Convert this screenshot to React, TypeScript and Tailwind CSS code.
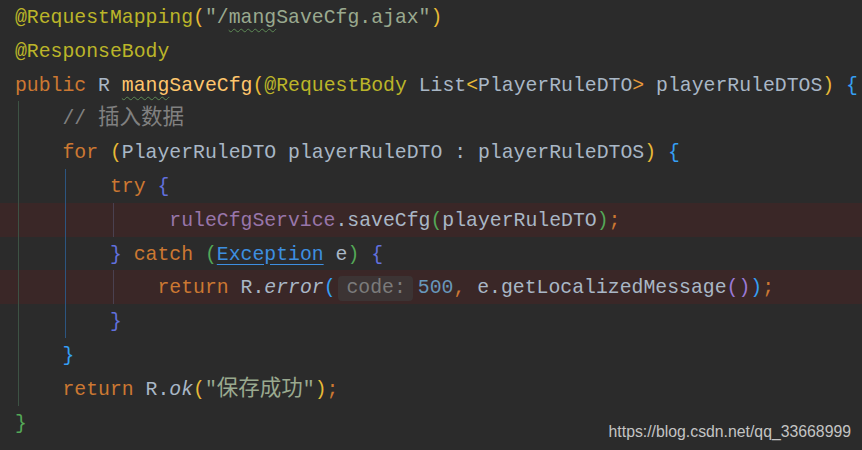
import type { ReactNode } from 'react'

// token colours (Darcula-ish + rainbow brackets)
const def = 'text-[#a9b7c6]'
const kw = 'text-[#cc7832]'
const ann = 'text-[#bbb529]'
const fn = 'text-[#ffc66d]'
const fld = 'text-[#9876aa]'
const cmt = 'text-[#808080]'
const str = 'text-[#9aa98f]'
const num = 'text-[#6897bb]'
const bYellow = 'text-[#e8ba36]'
const bGreen = 'text-[#54a857]'
const bBlue = 'text-[#359ff4]'
const bIndigo = 'text-[#6170dd]'
const bPurple = 'text-[#9b79d6]'

const guides = ['bg-[#3d5244]', 'bg-[#2c5580]', 'bg-[#4a4150]']

function Cjk({ children }: { children: ReactNode }) {
  return <span className="font-['Noto_Sans_CJK_SC',sans-serif] text-[21.5px] leading-[1]">{children}</span>
}

function Typo({ children }: { children: ReactNode }) {
  return (
    <span className="underline decoration-wavy decoration-[#5d8a55] decoration-1 underline-offset-[5px]">
      {children}
    </span>
  )
}

function Line({ depth = 0, error = false, children }: { depth?: number; error?: boolean; children?: ReactNode }) {
  return (
    <div className={`flex h-[33.8px] leading-[33.8px] pl-[15px] ${error ? 'bg-[#3a2727]' : ''}`}>
      {guides.slice(0, depth).map((g) => (
        <div key={g} className="w-[4ch] shrink-0">
          <div className={`ml-[3px] h-full w-px ${g}`} />
        </div>
      ))}
      <span className="whitespace-pre pt-[2px]">{children}</span>
    </div>
  )
}

export default function App() {
  return (
    <div className="relative w-[862px] h-[450px] overflow-hidden bg-[#2b2b2b] font-['Liberation_Mono',monospace] text-[19.8px] text-[#a9b7c6]">
      <Line>
        <span className={ann}>@RequestMapping</span>
        <span className={bYellow}>(</span>
        <span className={str}>
          "/<Typo>mang</Typo>SaveCfg.ajax"
        </span>
        <span className={bYellow}>)</span>
      </Line>
      <Line>
        <span className={ann}>@ResponseBody</span>
      </Line>
      <Line>
        <span className={kw}>public </span>
        <span className={def}>R </span>
        <span className={fn}>
          <Typo>mang</Typo>SaveCfg
        </span>
        <span className={bYellow}>(</span>
        <span className={ann}>@RequestBody </span>
        <span className={def}>List</span>
        <span className={bYellow}>&lt;</span>
        <span className={def}>PlayerRuleDTO</span>
        <span className="text-[#e89a3a]">&gt;</span>
        <span className={def}> playerRuleDTOS</span>
        <span className={bYellow}>)</span>
        <span> </span>
        <span className={bBlue}>{'{'}</span>
      </Line>
      <Line depth={1}>
        <span className={cmt}>
          // <Cjk>插入数据</Cjk>
        </span>
      </Line>
      <Line depth={1}>
        <span className={kw}>for </span>
        <span className={bYellow}>(</span>
        <span className={def}>PlayerRuleDTO playerRuleDTO : playerRuleDTOS</span>
        <span className={bYellow}>)</span>
        <span> </span>
        <span className={bBlue}>{'{'}</span>
      </Line>
      <Line depth={2}>
        <span className={kw}>try </span>
        <span className={bIndigo}>{'{'}</span>
      </Line>
      <Line depth={3} error>
        <span> </span>
        <span className={fld}>ruleCfgService</span>
        <span className={def}>.saveCfg</span>
        <span className={bGreen}>(</span>
        <span className={def}>playerRuleDTO</span>
        <span className={bGreen}>)</span>
        <span className={kw}>;</span>
      </Line>
      <Line depth={2}>
        <span className={bIndigo}>{'}'}</span>
        <span className={kw}> catch </span>
        <span className={bGreen}>(</span>
        <span className="text-[#3d8fe0] underline decoration-[#3d8fe0] underline-offset-[4px]">Exception</span>
        <span className={def}> e</span>
        <span className={bGreen}>)</span>
        <span> </span>
        <span className={bIndigo}>{'{'}</span>
      </Line>
      <Line depth={3} error>
        <span className={kw}>return </span>
        <span className={def}>R.</span>
        <span className={`${def} italic`}>error</span>
        <span className={bBlue}>(</span>
        <span className="inline-block ml-[2px] mr-[5px] pl-[9px] pr-[7px] rounded-[4px] bg-[#3c3434] text-[#7b7b7b] leading-[25px]">
          code:
        </span>
        <span className={num}>500</span>
        <span className={kw}>, </span>
        <span className={def}>e.getLocalizedMessage</span>
        <span className={bPurple}>()</span>
        <span className={bBlue}>)</span>
        <span className={kw}>;</span>
      </Line>
      <Line depth={2}>
        <span className={bIndigo}>{'}'}</span>
      </Line>
      <Line depth={1}>
        <span className={bBlue}>{'}'}</span>
      </Line>
      <Line depth={1}>
        <span className={kw}>return </span>
        <span className={def}>R.</span>
        <span className={`${def} italic`}>ok</span>
        <span className={bYellow}>(</span>
        <span className={str}>
          "<Cjk>保存成功</Cjk>"
        </span>
        <span className={bYellow}>)</span>
        <span className={kw}>;</span>
      </Line>
      <Line>
        <span className={bGreen}>{'}'}</span>
      </Line>

      <div className="absolute right-[11px] bottom-[9px] font-['Liberation_Sans',sans-serif] text-[15.8px] leading-[18px] text-[#c4c4c4]">
        https://blog.csdn.net/qq_33668999
      </div>
    </div>
  )
}
